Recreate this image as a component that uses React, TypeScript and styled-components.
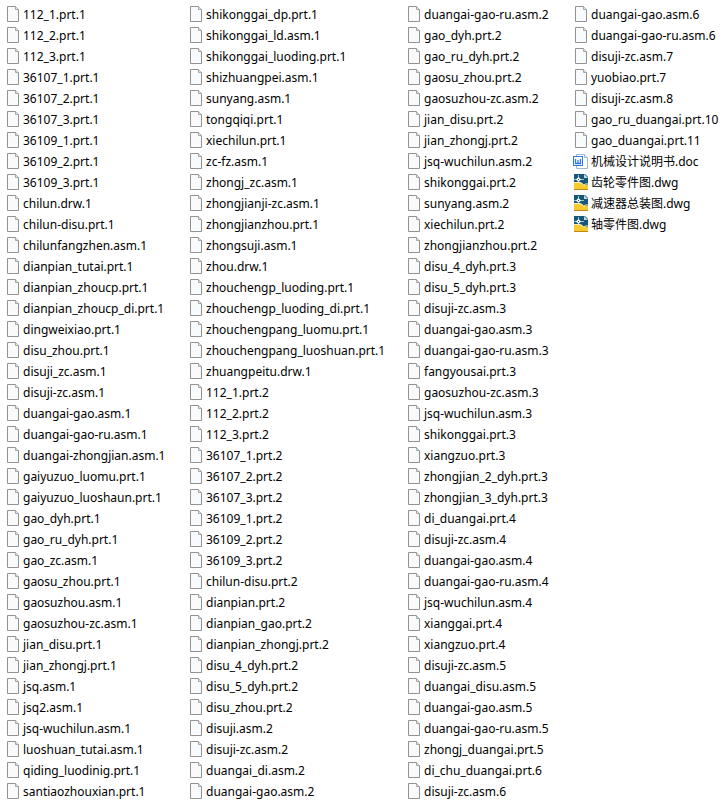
import React from "react";
import styled, { createGlobalStyle } from "styled-components";

const GlobalStyle = createGlobalStyle`
  body {
    margin: 0;
    background: #fff;
    color: #000;
    font-family: "Noto Sans", "Noto Sans CJK SC", sans-serif;
  }
`;

const FileView = styled.main`
  display: grid;
  grid-template-columns: 183fr 218fr 167fr 160fr;
  padding-top: 4px;
`;

const Column = styled.ul`
  margin: 0;
  padding: 0 0 0 5px;
  list-style: none;
  min-width: 0;
`;

const FileRow = styled.li`
  display: flex;
  align-items: center;
  gap: 2px;
  height: 21px;
`;

const FileName = styled.span`
  font-size: 12px;
  line-height: 21px;
  white-space: nowrap;
`;

const Icon = styled.svg`
  flex: none;
  width: 16px;
  height: 17px;
`;

const BlankIcon = () => (
  <Icon viewBox="0 0 16 17" aria-hidden="true">
    <path d="M2.5.5h8l3 3v12h-11z" fill="#f9fafb" stroke="#929292" />
    <path d="M10.5.5v3h3" fill="#e4e6e8" stroke="#a6a6a6" />
  </Icon>
);

const DocIcon = () => (
  <Icon viewBox="0 0 16 17" aria-hidden="true">
    <path d="M3.5 1.5h8l3 3v11h-11z" fill="#fff" stroke="#a3b6d2" />
    <path d="M11.5 1.5v3h3" fill="#edf2f8" stroke="#a3b6d2" />
    <path d="M0 3h10v10H0z" fill="#2f78e8" />
    <path d="M1 4h8v8H1z" fill="#fff" />
    <path d="M2.5 6v4.500h5V6M5 7v3" fill="none" stroke="#2f78e8" strokeWidth="1.300" />
  </Icon>
);

const DwgIcon = () => (
  <Icon viewBox="0 0 16 17" aria-hidden="true">
    <path d="M1 0h11l3 3v8H1z" fill="#17587a" />
    <path d="M11 0v4h4z" fill="#c9d6dc" />
    <path d="M1 8h4c3 0 4.500 1 6 3h4v5H1z" fill="#f7cb2d" />
    <path d="M1 8.500h4c3 0 4.500 1 6 3l1-1.500h3" fill="none" stroke="#fdf3c4" />
    <path d="M1 15.500h14" stroke="#bd8a18" />
    <path d="M5.500 1v6M1 5.500h10" stroke="#9cc4d4" />
    <path d="M5.500 3l2.500 2.500L5.500 8 3 5.500z" fill="#fff" />
    <path d="M5 5h1v1H5z" fill="#17587a" />
  </Icon>
);

function FileIcon({ name }: { name: string }) {
  if (name.endsWith(".doc")) return <DocIcon />;
  if (name.endsWith(".dwg")) return <DwgIcon />;
  return <BlankIcon />;
}

const columns: string[][] = [
  [
    "112_1.prt.1", "112_2.prt.1", "112_3.prt.1", "36107_1.prt.1", "36107_2.prt.1",
    "36107_3.prt.1", "36109_1.prt.1", "36109_2.prt.1", "36109_3.prt.1", "chilun.drw.1",
    "chilun-disu.prt.1", "chilunfangzhen.asm.1", "dianpian_tutai.prt.1", "dianpian_zhoucp.prt.1",
    "dianpian_zhoucp_di.prt.1", "dingweixiao.prt.1", "disu_zhou.prt.1", "disuji_zc.asm.1",
    "disuji-zc.asm.1", "duangai-gao.asm.1", "duangai-gao-ru.asm.1", "duangai-zhongjian.asm.1",
    "gaiyuzuo_luomu.prt.1", "gaiyuzuo_luoshaun.prt.1", "gao_dyh.prt.1", "gao_ru_dyh.prt.1",
    "gao_zc.asm.1", "gaosu_zhou.prt.1", "gaosuzhou.asm.1", "gaosuzhou-zc.asm.1",
    "jian_disu.prt.1", "jian_zhongj.prt.1", "jsq.asm.1", "jsq2.asm.1", "jsq-wuchilun.asm.1",
    "luoshuan_tutai.asm.1", "qiding_luodinig.prt.1", "santiaozhouxian.prt.1",
  ],
  [
    "shikonggai_dp.prt.1", "shikonggai_ld.asm.1", "shikonggai_luoding.prt.1", "shizhuangpei.asm.1",
    "sunyang.asm.1", "tongqiqi.prt.1", "xiechilun.prt.1", "zc-fz.asm.1", "zhongj_zc.asm.1",
    "zhongjianji-zc.asm.1", "zhongjianzhou.prt.1", "zhongsuji.asm.1", "zhou.drw.1",
    "zhouchengp_luoding.prt.1", "zhouchengp_luoding_di.prt.1", "zhouchengpang_luomu.prt.1",
    "zhouchengpang_luoshuan.prt.1", "zhuangpeitu.drw.1", "112_1.prt.2", "112_2.prt.2",
    "112_3.prt.2", "36107_1.prt.2", "36107_2.prt.2", "36107_3.prt.2", "36109_1.prt.2",
    "36109_2.prt.2", "36109_3.prt.2", "chilun-disu.prt.2", "dianpian.prt.2",
    "dianpian_gao.prt.2", "dianpian_zhongj.prt.2", "disu_4_dyh.prt.2", "disu_5_dyh.prt.2",
    "disu_zhou.prt.2", "disuji.asm.2", "disuji-zc.asm.2", "duangai_di.asm.2", "duangai-gao.asm.2",
  ],
  [
    "duangai-gao-ru.asm.2", "gao_dyh.prt.2", "gao_ru_dyh.prt.2", "gaosu_zhou.prt.2",
    "gaosuzhou-zc.asm.2", "jian_disu.prt.2", "jian_zhongj.prt.2", "jsq-wuchilun.asm.2",
    "shikonggai.prt.2", "sunyang.asm.2", "xiechilun.prt.2", "zhongjianzhou.prt.2",
    "disu_4_dyh.prt.3", "disu_5_dyh.prt.3", "disuji-zc.asm.3", "duangai-gao.asm.3",
    "duangai-gao-ru.asm.3", "fangyousai.prt.3", "gaosuzhou-zc.asm.3", "jsq-wuchilun.asm.3",
    "shikonggai.prt.3", "xiangzuo.prt.3", "zhongjian_2_dyh.prt.3", "zhongjian_3_dyh.prt.3",
    "di_duangai.prt.4", "disuji-zc.asm.4", "duangai-gao.asm.4", "duangai-gao-ru.asm.4",
    "jsq-wuchilun.asm.4", "xianggai.prt.4", "xiangzuo.prt.4", "disuji-zc.asm.5",
    "duangai_disu.asm.5", "duangai-gao.asm.5", "duangai-gao-ru.asm.5", "zhongj_duangai.prt.5",
    "di_chu_duangai.prt.6", "disuji-zc.asm.6",
  ],
  [
    "duangai-gao.asm.6", "duangai-gao-ru.asm.6", "disuji-zc.asm.7", "yuobiao.prt.7",
    "disuji-zc.asm.8", "gao_ru_duangai.prt.10", "gao_duangai.prt.11", "机械设计说明书.doc",
    "齿轮零件图.dwg", "减速器总装图.dwg", "轴零件图.dwg",
  ],
];

export default function App() {
  return (
    <>
      <GlobalStyle />
      <FileView aria-label="Files">
        {columns.map((files) => (
          <Column key={files[0]}>
            {files.map((name) => (
              <FileRow key={name}>
                <FileIcon name={name} />
                <FileName>{name}</FileName>
              </FileRow>
            ))}
          </Column>
        ))}
      </FileView>
    </>
  );
}
